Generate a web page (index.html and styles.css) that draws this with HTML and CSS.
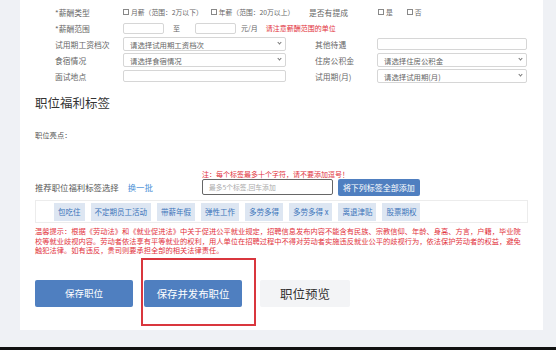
FILE: index.html
```html
<!DOCTYPE html>
<html lang="zh-CN">
<head>
    <meta charset="UTF-8">
    <meta name="viewport" content="width=device-width, initial-scale=1.0">
    <title>职位福利标签</title>
    <link rel="stylesheet" href="styles.css">
</head>
<body>

<div class="page">
<div class="card">

    <div class="form">
        <div class="row">
            <span class="label">*薪酬类型</span>
            <div class="field checks">
                <label class="check"><span class="box"></span>月薪（范围：2万以下）</label>
                <label class="check"><span class="box"></span>年薪（范围：20万以上）</label>
            </div>
            <span class="label first-right">是否有提成</span>
            <div class="field">
                <label class="check yes"><span class="box"></span>是</label>
                <label class="check"><span class="box"></span>否</label>
            </div>
        </div>
        <div class="row">
            <span class="label">*薪酬范围</span>
            <div class="field range">
                <span class="input small"></span>
                <span class="to">至</span>
                <span class="input small"></span>
                <span class="unit">元/月</span>
                <span class="warn">请注意薪酬范围的单位</span>
            </div>
        </div>
        <div class="row">
            <span class="label">试用期工资档次</span>
            <div class="field"><span class="select">请选择试用期工资档次<i class="arrow"></i></span></div>
            <span class="label right">其他待遇</span>
            <div class="field right"><span class="input"></span></div>
        </div>
        <div class="row">
            <span class="label">食宿情况</span>
            <div class="field"><span class="select">请选择食宿情况<i class="arrow"></i></span></div>
            <span class="label right">住房公积金</span>
            <div class="field right"><span class="select">请选择住房公积金<i class="arrow"></i></span></div>
        </div>
        <div class="row">
            <span class="label">面试地点</span>
            <div class="field"><span class="input"></span></div>
            <span class="label right">试用期(月)</span>
            <div class="field right"><span class="select">请选择试用期(月)<i class="arrow"></i></span></div>
        </div>
    </div>

    <h2>职位福利标签</h2>
    <div class="highlight">职位亮点：</div>

    <div class="note">注：每个标签最多十个字符，请不要添加逗号！</div>
    <div class="tag-bar">
        <span class="tag-title">推荐职位福利标签选择</span>
        <a class="swap">换一批</a>
        <span class="tag-input">最多5个标签,回车添加</span>
        <button class="add-all">将下列标签全部添加</button>
    </div>

    <div class="tags">
        <span class="tag">包吃住</span>
        <span class="tag">不定期员工活动</span>
        <span class="tag">带薪年假</span>
        <span class="tag">弹性工作</span>
        <span class="tag">多劳多得</span>
        <span class="tag">多劳多得 x</span>
        <span class="tag">离退津贴</span>
        <span class="tag">股票期权</span>
    </div>

    <p class="tips">温馨提示：根据《劳动法》和《就业促进法》中关于促进公平就业规定，招聘信息发布内容不能含有民族、宗教信仰、年龄、身高、方言，户籍，毕业院<br>校等就业歧视内容。劳动者依法享有平等就业的权利，用人单位在招聘过程中不得对劳动者实施违反就业公平的歧视行为，依法保护劳动者的权益，避免<br>触犯法律。如有违反，贵司则要承担全部的相关法律责任。</p>

    <div class="actions">
        <button class="btn">保存职位</button>
        <button class="btn marked">保存并发布职位<span class="mark"></span></button>
        <button class="btn preview">职位预览</button>
    </div>

</div>
</div>

</body>
</html>
```

FILE: styles.css
```css
body {
    margin: 0;
    background: #eff1f5;
    font-family: "Noto Sans CJK SC", "Noto Sans", sans-serif;
    color: #555;
    border-bottom: 3px solid #111;
}
.page {
    padding: 0 13px 17px 20px;
}
.card {
    background: #fff;
    padding: 0 15px 23px 15px;
}

/* form rows */
.form {
    padding: 4px 0 0 20px;
}
.row {
    display: flex;
    align-items: center;
    height: 16px;
    white-space: nowrap;
}
.row > * {
    flex-shrink: 0;
}
.label {
    width: 68px;
    font-size: 7.8px;
    color: #666;
}
.label.right {
    margin-left: 29px;
    width: 62px;
}
.label.first-right {
    width: 69px;
}
.field {
    width: 163px;
    display: flex;
    align-items: center;
}
.field.right {
    width: 150px;
}
.field.checks {
    width: 186px;
}
.field.range {
    width: auto;
}
.check {
    display: flex;
    align-items: center;
    font-size: 6.8px;
    color: #666;
    margin-right: 8px;
}
.check.yes {
    margin-right: 14px;
}
.box {
    width: 4px;
    height: 4px;
    border: 1px solid #888;
    margin-right: 2px;
}
.input {
    display: block;
    box-sizing: border-box;
    width: 100%;
    height: 12px;
    border: 1px solid #d6d6d6;
    border-radius: 2px;
}
.input.small {
    width: 41px;
    height: 11px;
}
.to {
    font-size: 7px;
    margin: 0 15px 0 9px;
    color: #666;
}
.unit {
    font-size: 7px;
    margin-left: 5px;
    color: #666;
}
.warn {
    font-size: 7px;
    margin-left: 8px;
    color: #e2323c;
}
.select {
    position: relative;
    display: flex;
    align-items: center;
    box-sizing: border-box;
    width: 100%;
    height: 14px;
    padding-left: 6px;
    border: 1px solid #d6d6d6;
    border-radius: 2px;
    font-size: 7.4px;
    color: #666;
}
.arrow {
    position: absolute;
    right: 4px;
    top: 3px;
    width: 2px;
    height: 2px;
    border-right: 1px solid #777;
    border-bottom: 1px solid #777;
    transform: rotate(45deg);
}

h2 {
    margin: 11px 0 0;
    font-size: 12.5px;
    line-height: 16px;
    font-weight: normal;
    color: #333;
}
.highlight {
    margin-top: 19px;
    font-size: 7.3px;
    line-height: 10px;
    color: #555;
}

/* tag selection */
.note {
    margin: 29px 0 0 167px;
    font-size: 7px;
    line-height: 10px;
    color: #e2323c;
}
.tag-bar {
    display: flex;
    align-items: center;
    height: 16px;
}
.tag-title {
    font-size: 8.4px;
    color: #555;
}
.swap {
    margin-left: 9px;
    font-size: 8.4px;
    color: #4a8fd6;
}
.tag-input {
    box-sizing: border-box;
    width: 131px;
    height: 16px;
    margin-left: 49px;
    padding-left: 6px;
    border: 1px solid #666;
    border-radius: 2px;
    font-size: 6.8px;
    line-height: 14px;
    color: #aaa;
}
.add-all {
    margin-left: 5px;
    height: 17px;
    padding: 0 5px;
    border: none;
    border-radius: 2px;
    background: #4f7fc0;
    color: #fff;
    font-family: inherit;
    font-size: 8px;
}
.tags {
    display: flex;
    gap: 6px;
    margin-top: 5px;
    height: 23px;
    box-sizing: border-box;
    padding: 2px 0 0 18px;
    border: 1px solid #ececec;
}
.tag {
    height: 18px;
    line-height: 18px;
    padding: 0 4px;
    background: #dde6f2;
    color: #3c74ba;
    font-size: 7.5px;
}
.tips {
    margin: 4px 0 0;
    font-size: 7.25px;
    line-height: 9.5px;
    white-space: nowrap;
    color: #e2323c;
}

/* bottom buttons */
.actions {
    display: flex;
    margin-top: 24px;
}
.btn {
    width: 98px;
    height: 27px;
    margin-right: 11px;
    border: none;
    border-radius: 2px;
    background: #4f7fc0;
    color: #fff;
    font-family: inherit;
    font-size: 9.5px;
}
.btn.marked {
    position: relative;
    margin-right: 18px;
    font-size: 10.4px;
}
.mark {
    position: absolute;
    left: -3px;
    top: -22px;
    width: 111px;
    height: 64px;
    border: 2px solid #d9363e;
}
.btn.preview {
    width: 90px;
    background: #f3f4f6;
    color: #333;
    font-size: 12.5px;
}
```
